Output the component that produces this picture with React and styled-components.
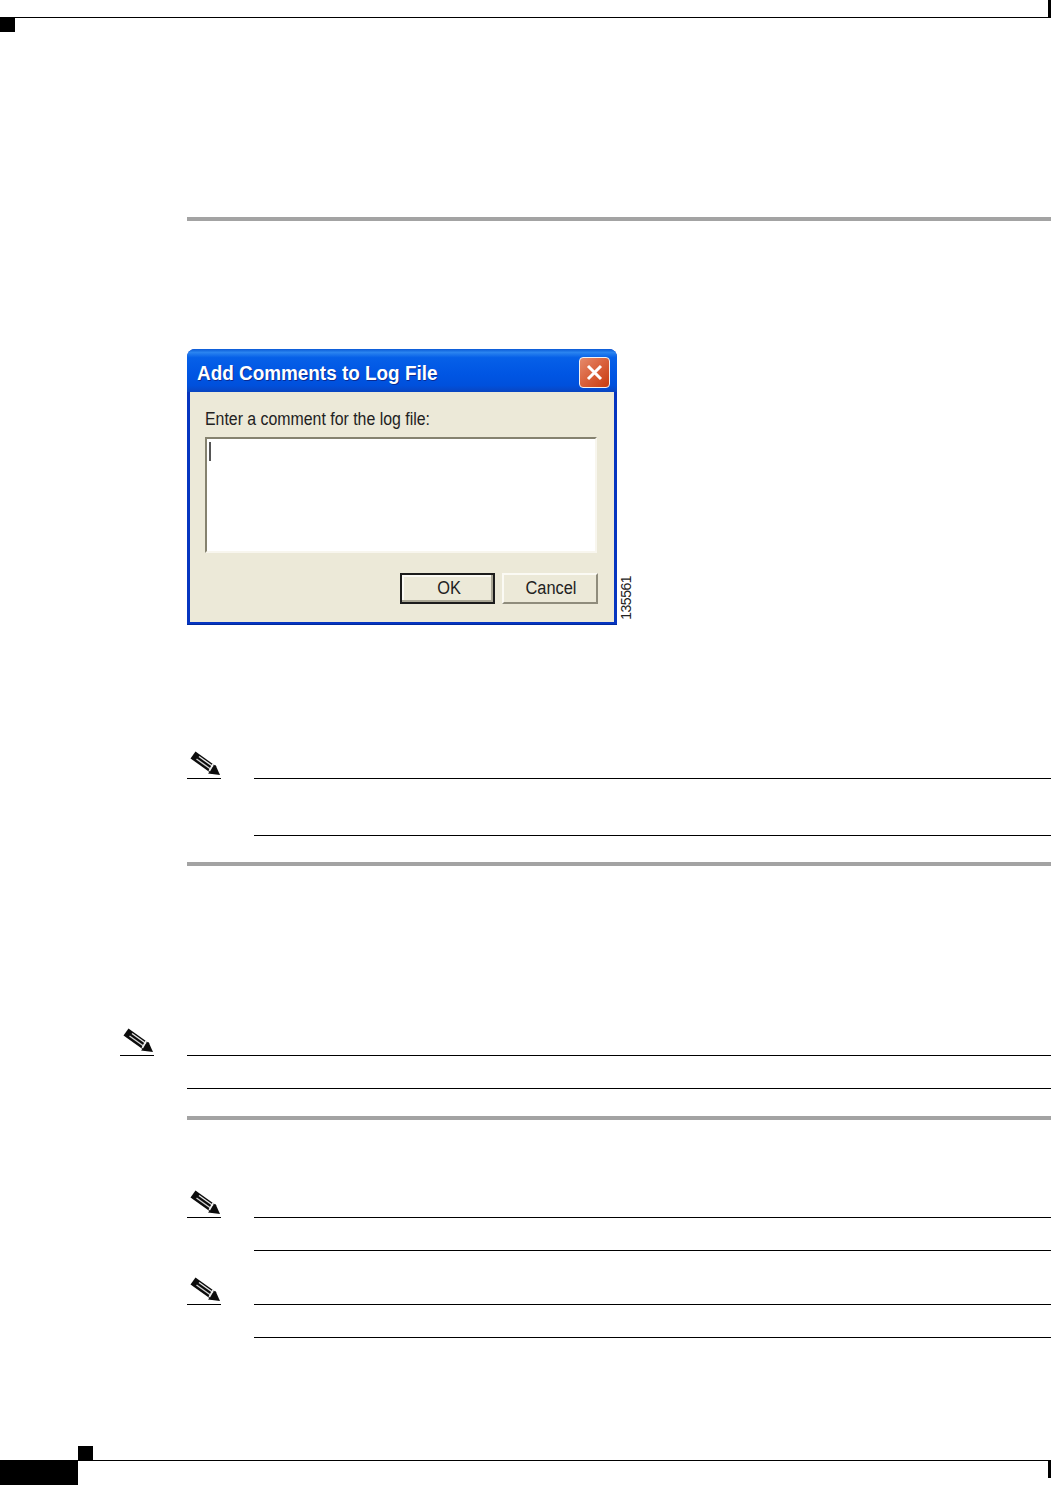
import styled, { createGlobalStyle } from "styled-components";

const GlobalStyle = createGlobalStyle`
  html, body {
    margin: 0;
    padding: 0;
    background: #fff;
    font-family: "Liberation Sans", Arial, sans-serif;
  }
`;

const Page = styled.div`
  width: 1051px;
  height: 1485px;
  display: flex;
  flex-direction: column;
  overflow: hidden;
`;

const TopBar = styled.div`
  height: 17px;
  border-bottom: 1px solid #000;
  display: flex;
  justify-content: flex-end;
`;

const Tick = styled.div`
  width: 3px;
  height: 17px;
  background: #000;
`;

const Square = styled.div`
  width: 15px;
  height: ${(p) => p.$h || 15}px;
  background: #000;
  margin-top: ${(p) => p.$top || 0}px;
  margin-left: ${(p) => p.$left || 0}px;
`;

const Content = styled.main`
  flex: 1;
  padding: 185px 0 0 187px;
  display: flex;
  flex-direction: column;
`;

const Bar = styled.div`
  height: 4px;
  background: #a3a3a3;
  margin-top: ${(p) => p.$top || 0}px;
`;

const Figure = styled.div`
  margin-top: 128px;
  display: flex;
  align-items: flex-end;
  gap: 2px;
`;

const Dialog = styled.div`
  width: 430px;
  height: 276px;
  box-sizing: border-box;
  display: flex;
  flex-direction: column;
  background: #0635c0;
  border-bottom: 1px solid #002a9e;
  border-radius: 8px 8px 0 0;
  padding: 0 3px 2px;
`;

const TitleBar = styled.div`
  height: 43px;
  margin: 0 -3px;
  padding: 4px 7px 0 10px;
  box-sizing: border-box;
  display: flex;
  align-items: center;
  justify-content: space-between;
  border-radius: 8px 8px 0 0;
  background: linear-gradient(180deg, #0a5ad6 0%, #2a84f0 8%, #0660e8 20%, #0055e3 60%, #0050dc 85%, #0a45c0 100%);
`;

const Title = styled.span`
  display: inline-block;
  color: #fff;
  font-size: 20px;
  line-height: 25px;
  padding-top: 2px;
  font-weight: 700;
  transform: scaleX(0.945);
  transform-origin: left center;
  text-shadow: 1px 1px 0 #0a2a90;
`;

const CloseButton = styled.div`
  width: 31px;
  height: 31px;
  box-sizing: border-box;
  border: 1px solid #f2f2f2;
  border-radius: 4px;
  background: linear-gradient(135deg, #e58a6c 0%, #d9603a 50%, #c83c10 100%);
  display: flex;
  align-items: center;
  justify-content: center;
`;

const DialogBody = styled.div`
  flex: 1;
  background: #ece9d8;
  padding: 17px 17px 0 15px;
  display: flex;
  flex-direction: column;
`;

const Label = styled.div`
  font-size: 17.5px;
  line-height: 21px;
  color: #222;
  transform: scaleX(0.907);
  transform-origin: left center;
  white-space: nowrap;
`;

const TextBox = styled.div`
  margin-top: 7px;
  height: 116px;
  box-sizing: border-box;
  background: #fff;
  border-top: 2px solid #85826f;
  border-left: 2px solid #85826f;
  border-right: 2px solid #f8f6ee;
  border-bottom: 2px solid #f8f6ee;
  padding: 3px 2px;
`;

const Caret = styled.div`
  width: 2px;
  height: 19px;
  background: #555;
`;

const ButtonRow = styled.div`
  margin: 20px -1px 0 0;
  display: flex;
  justify-content: flex-end;
  gap: 7px;
`;

const Button = styled.div`
  width: ${(p) => p.$w}px;
  height: 31px;
  box-sizing: border-box;
  padding-left: 3px;
  display: flex;
  align-items: center;
  justify-content: center;
  background: #ece9d8;
  font-size: 18px;
  color: #222;
  ${(p) =>
    p.$primary
      ? `border: 2px solid #1c1c1c; box-shadow: inset -2px -2px 0 #a9a695, inset 2px 2px 0 #fbfaf4;`
      : `border-top: 2px solid #fbfaf4; border-left: 2px solid #fbfaf4; border-right: 2px solid #8f8c7c; border-bottom: 2px solid #8f8c7c;`}
`;

const ButtonText = styled.span`
  display: inline-block;
  transform: scaleX(0.91);
`;

const FigureNumber = styled.div`
  writing-mode: vertical-rl;
  transform: rotate(180deg);
  font-size: 14px;
  line-height: 14px;
  letter-spacing: -0.5px;
  color: #222;
  margin-bottom: 5px;
`;

const Note = styled.div`
  display: flex;
  align-items: flex-start;
  margin-top: ${(p) => p.$top || 0}px;
  margin-left: ${(p) => p.$left || 0}px;
`;

const NoteMark = styled.div`
  width: 34px;
  height: 29px;
  flex-shrink: 0;
  border-bottom: 1px solid #000;
  margin-right: 33px;
  box-sizing: border-box;
  svg {
    display: block;
  }
`;

const NoteText = styled.div`
  flex: 1;
  height: ${(p) => p.$h}px;
  box-sizing: border-box;
  margin-top: 28px;
  border-top: 1px solid #000;
  border-bottom: 1px solid #000;
`;

const Footer = styled.footer`
  height: 25px;
  display: flex;
`;

const FooterTab = styled.div`
  width: 78px;
  background: #000;
`;

const FooterRule = styled.div`
  flex: 1;
  border-top: 1px solid #000;
  display: flex;
  justify-content: flex-end;
`;

const Pencil = () => (
  <svg width="34" height="28" viewBox="0 0 34 28">
    <line x1="6" y1="5" x2="27" y2="20" stroke="#0c0c0c" strokeWidth="8.5" />
    <line x1="12" y1="6.5" x2="26" y2="16.5" stroke="#e6e6e6" strokeWidth="1.4" />
    <line x1="9.5" y1="9" x2="23.5" y2="19" stroke="#d0d0d0" strokeWidth="1.4" />
    <polygon points="28.5,15 33,25 21,23.5" fill="#0c0c0c" />
    <polygon points="27,14.5 23,21.5 21.5,20.5 25.5,13.5" fill="#f0f0f0" />
  </svg>
);

const CloseIcon = () => (
  <svg width="19" height="19" viewBox="0 0 19 19">
    <path d="M3 3 L16 16 M16 3 L3 16" stroke="#fff" strokeWidth="3" />
  </svg>
);

const App = () => {
  return (
    <Page>
      <GlobalStyle />
      <TopBar>
        <Tick />
      </TopBar>
      <Square $top={-1} />
      <Content>
        <Bar />
        <Figure>
          <Dialog>
            <TitleBar>
              <Title>Add Comments to Log File</Title>
              <CloseButton>
                <CloseIcon />
              </CloseButton>
            </TitleBar>
            <DialogBody>
              <Label>Enter a comment for the log file:</Label>
              <TextBox>
                <Caret />
              </TextBox>
              <ButtonRow>
                <Button $w={95} $primary><ButtonText>OK</ButtonText></Button>
                <Button $w={96}><ButtonText>Cancel</ButtonText></Button>
              </ButtonRow>
            </DialogBody>
          </Dialog>
          <FigureNumber>135561</FigureNumber>
        </Figure>
        <Note $top={125}>
          <NoteMark><Pencil /></NoteMark>
          <NoteText $h={58} />
        </Note>
        <Bar $top={26} />
        <Note $top={161} $left={-67}>
          <NoteMark><Pencil /></NoteMark>
          <NoteText $h={34} />
        </Note>
        <Bar $top={27} />
        <Note $top={69}>
          <NoteMark><Pencil /></NoteMark>
          <NoteText $h={34} />
        </Note>
        <Note $top={25}>
          <NoteMark><Pencil /></NoteMark>
          <NoteText $h={34} />
        </Note>
      </Content>
      <Square $left={78} $h={14} />
      <Footer>
        <FooterTab />
        <FooterRule>
          <Tick />
        </FooterRule>
      </Footer>
    </Page>
  );
};

export default App;
